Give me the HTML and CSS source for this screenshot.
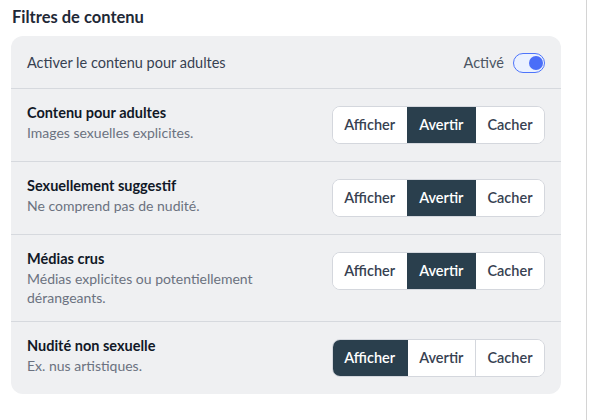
FILE: index.html
```html
<!DOCTYPE html>
<html lang="fr">
<head>
<meta charset="utf-8">
<title>Filtres de contenu</title>
<link rel="stylesheet" href="styles.css">
</head>
<body>
<div class="page">
  <main class="column">
    <h2 class="heading">Filtres de contenu</h2>
    <section class="panel">
      <div class="row row-toggle">
        <span class="row-label">Activer le contenu pour adultes</span>
        <label class="toggle-wrap">
          <span class="toggle-text">Activé</span>
          <span class="toggle"><span class="knob"></span></span>
        </label>
      </div>
      <div class="row">
        <div class="info">
          <div class="title">Contenu pour adultes</div>
          <div class="desc">Images sexuelles explicites.</div>
        </div>
        <div class="seg">
          <button class="seg-btn">Afficher</button>
          <button class="seg-btn active">Avertir</button>
          <button class="seg-btn">Cacher</button>
        </div>
      </div>
      <div class="row">
        <div class="info">
          <div class="title">Sexuellement suggestif</div>
          <div class="desc">Ne comprend pas de nudité.</div>
        </div>
        <div class="seg">
          <button class="seg-btn">Afficher</button>
          <button class="seg-btn active">Avertir</button>
          <button class="seg-btn">Cacher</button>
        </div>
      </div>
      <div class="row">
        <div class="info">
          <div class="title">Médias crus</div>
          <div class="desc">Médias explicites ou potentiellement dérangeants.</div>
        </div>
        <div class="seg">
          <button class="seg-btn">Afficher</button>
          <button class="seg-btn active">Avertir</button>
          <button class="seg-btn">Cacher</button>
        </div>
      </div>
      <div class="row">
        <div class="info">
          <div class="title">Nudité non sexuelle</div>
          <div class="desc">Ex. nus artistiques.</div>
        </div>
        <div class="seg">
          <button class="seg-btn active">Afficher</button>
          <button class="seg-btn">Avertir</button>
          <button class="seg-btn">Cacher</button>
        </div>
      </div>
    </section>
  </main>
</div>
</body>
</html>
```

FILE: styles.css
```css
* { box-sizing: border-box; }
html, body { margin: 0; padding: 0; background: #ffffff; }
body {
  font-family: Lato, "Open Sans", sans-serif;
  color: #1f2937;
  height: 420px;
  overflow: hidden;
}
.page { display: flex; height: 420px; }
.column {
  width: 587px;
  border-right: 1px solid #d4d4d4;
  padding: 5px 25px 0 11px;
}
.heading {
  margin: 0 0 7px 1px;
  font-size: 16.5px;
  line-height: 24px;
  font-weight: 700;
  color: #1f2937;
}
.panel {
  background: #eff0f2;
  border-radius: 12px;
  width: 550px;
}
.row {
  display: flex;
  align-items: flex-start;
  justify-content: space-between;
  min-height: 73px;
  padding: 14px 16px;
  border-bottom: 1px solid #d6d9de;
}
.row:last-child { border-bottom: none; min-height: 72px; }
.row-toggle { min-height: 53px; padding: 16px 16px 15px; align-items: center; }
.row-label { font-size: 14.5px; line-height: 20px; color: #374151; }
.toggle-wrap { display: flex; align-items: center; gap: 9px; }
.toggle-text { font-size: 14.5px; line-height: 20px; color: #4b5563; }
.toggle {
  width: 32px;
  height: 20px;
  border: 1.5px solid #4d74fb;
  background: #eaf1ff;
  border-radius: 10px;
  display: flex;
  align-items: center;
  justify-content: flex-end;
  padding: 0 1px;
}
.knob { width: 14px; height: 14px; border-radius: 50%; background: #4a6ef8; }
.info { width: 280px; }
.title { font-size: 14.5px; line-height: 20px; font-weight: 700; color: #111827; margin-bottom: 1px; }
.desc { font-size: 14px; line-height: 18.5px; color: #6b7280; }
.seg {
  display: flex;
  height: 38px;
  margin-top: 2.5px;
  border: 1px solid #d4d7dd;
  border-radius: 8px;
  background: #ffffff;
  overflow: hidden;
}
.seg-btn {
  font-family: inherit;
  font-size: 14.5px;
  font-weight: 600;
  color: #374151;
  background: #ffffff;
  border: none;
  border-left: 1px solid #d4d7dd;
  padding: 0 11.5px;
  margin: 0;
}
.seg-btn:first-child { border-left: none; }
.seg-btn.active { background: #2a3f4d; color: #ffffff; border-left-color: #2a3f4d; }
.seg-btn.active + .seg-btn { border-left-color: #2a3f4d; }
```
